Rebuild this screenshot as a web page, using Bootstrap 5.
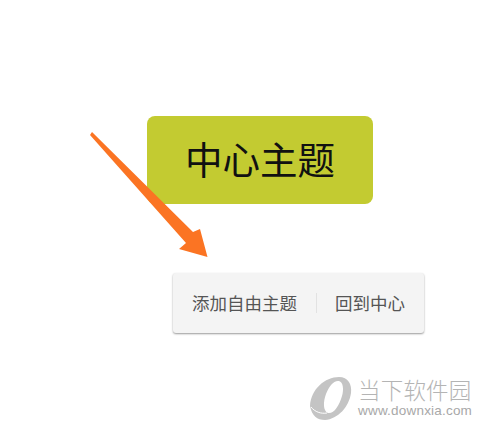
<!DOCTYPE html>
<html lang="zh">
<head>
<meta charset="utf-8">
<title>中心主题</title>
<link href="https://cdn.jsdelivr.net/npm/bootstrap@5.3.0/dist/css/bootstrap.min.css" rel="stylesheet">
<style>
html,body{margin:0;width:495px;height:441px;overflow:hidden;background:#fff;}
.stage{position:relative;width:495px;height:441px;padding-top:116px;font-family:"Noto Sans CJK SC","Liberation Sans",sans-serif;}
.topic{width:226px;height:88px;margin-left:147px;background:#c3cb31;border-radius:8px;color:#111;font-size:37.5px;line-height:83px;text-align:center;font-weight:400;}
.ctx{width:251px;height:60px;margin-left:173px;margin-top:69px;background:#f4f4f4;border-radius:3px;box-shadow:0 1px 2px rgba(0,0,0,.4);color:#555;font-size:17.5px;}
.ctx-a{width:143px;padding-left:19px;}
.ctx-b{padding-left:18px;border-left:1px solid #e2e2e2;height:20px;line-height:20px;}
.arrow{position:absolute;left:0;top:0;pointer-events:none;}
.wm{position:absolute;left:310px;top:376px;width:170px;color:#b4b4b4;}
.wm-zh{font-size:22.5px;line-height:26px;letter-spacing:.2px;font-weight:300;margin-left:48px;white-space:nowrap;}
.wm-en{font-family:"Liberation Sans",sans-serif;font-size:13.5px;line-height:16px;margin-left:48px;margin-top:1px;color:#a8a8a8;white-space:nowrap;letter-spacing:.2px;}
.wm svg{position:absolute;left:0;top:0;}
</style>
</head>
<body>
<div class="stage">
  <div class="topic">中心主题</div>
  <div class="ctx d-flex align-items-center">
    <div class="ctx-a text-nowrap">添加自由主题</div>
    <div class="ctx-b text-nowrap">回到中心</div>
  </div>
  <svg class="arrow" width="495" height="441" viewBox="0 0 495 441">
    <polygon points="90,135 92,132 193,232 200,229 207.5,257 179,249 186,243" fill="#fb7423"/>
  </svg>
  <div class="wm">
    <svg width="44" height="46" viewBox="0 0 44 46">
      <path fill-rule="evenodd" fill="#c4c4c4" d="M29 1C38 1 42 8 41 17C39 31 28 43 15 44C7 44 2 40 0 30C1 13 15 1 29 1ZM29 5C24 4 19 10 16 18C13 26 13 35 18 37C24 38 29 30 32 20C34 13 33 6 29 5Z"/>
      <path d="M1 31C5 36 11 38 17 37" fill="none" stroke="#fff" stroke-width="1"/>
    </svg>
    <div class="wm-zh">当下软件园</div>
    <div class="wm-en">www.downxia.com</div>
  </div>
</div>
<script src="https://cdn.jsdelivr.net/npm/bootstrap@5.3.0/dist/js/bootstrap.bundle.min.js"></script>
</body>
</html>
